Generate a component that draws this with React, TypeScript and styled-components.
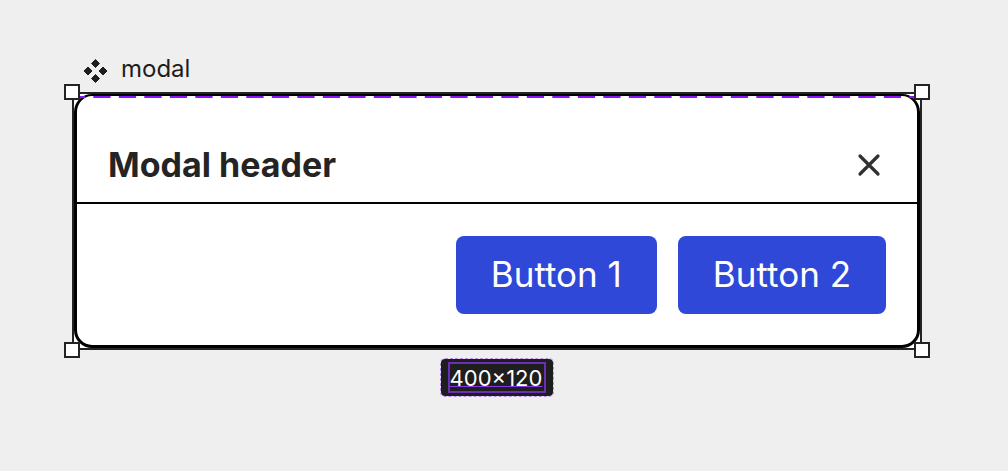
import React from "react";
import styled, { createGlobalStyle } from "styled-components";

const GlobalStyle = createGlobalStyle`
  *, *::before, *::after { box-sizing: border-box; }
  body {
    margin: 0;
    background: #efefef;
    color: #242424;
    font-family: Inter, "Liberation Sans", sans-serif;
  }
`;

const Canvas = styled.main`
  display: flex;
  flex-direction: column;
  min-height: 100vh;
  padding: 54px 86px 32px 72px;
`;

const LayerLabel = styled.div`
  display: flex;
  align-items: center;
  gap: 12px;
  height: 30px;
  margin: 0 0 8px 10px;
  color: #1e1e1e;
  font-size: 24px;
  line-height: 30px;

  svg { margin-top: 4px; }
`;

const Selection = styled.div`
  position: relative;
  border: 2px solid #242424;
  background: #fff;
`;

const Handle = styled.span<{ $v: "top" | "bottom"; $h: "left" | "right" }>`
  position: absolute;
  ${(p) => p.$v}: -10px;
  ${(p) => p.$h}: -10px;
  width: 16px;
  height: 16px;
  border: 2px solid #242424;
  background: #fff;
`;

const Modal = styled.section`
  border: solid #000;
  border-width: 2px 3px 3px;
  border-radius: 18px;
  background: #fff;
`;

const Guide = styled.svg`
  position: absolute;
  top: 2px;
  left: 2px;
  width: calc(100% - 4px);
  height: 2px;
`;

const Header = styled.header`
  display: flex;
  align-items: center;
  justify-content: space-between;
  padding: 42px 31px 10px;
  border-bottom: 2px solid #000;
`;

const Title = styled.h1`
  margin: 0;
  font-size: 34px;
  font-weight: 700;
  line-height: 54px;
`;

const CloseButton = styled.button`
  display: flex;
  padding: 4px;
  border: 0;
  background: transparent;
  color: #303030;
`;

const Footer = styled.footer`
  display: flex;
  justify-content: flex-end;
  gap: 21px;
  padding: 32px 31px 31px;
`;

const ActionButton = styled.button`
  padding: 17px 35px 19px;
  border: 0;
  border-radius: 8px;
  background: #3048d8;
  color: #fff;
  font: 400 35px/42px Inter, "Liberation Sans", sans-serif;
`;

const SizeBadge = styled.div`
  align-self: center;
  margin-top: 8px;
  padding: 3px 7px;
  border: 1px dashed #b98af0;
  border-radius: 5px;
  background: #1e1e1e;
  background-clip: padding-box;
`;

const SizeText = styled.div`
  padding: 1px 2px 0 0;
  border: 2px solid #6b2fb5;
  color: #fff;
  font-size: 22px;
  line-height: 26px;

  span {
    text-decoration: underline #8638e5 1px;
    text-underline-offset: 0;
    text-decoration-skip-ink: none;
  }
`;

export default function App() {
  return (
    <>
      <GlobalStyle />
      <Canvas>
        <LayerLabel>
          <svg width="27" height="26" viewBox="0 0 27 26" fill="currentColor" stroke="currentColor" strokeLinejoin="round" aria-hidden="true">
            <path d="M13.5 1.500 17.500 5.500 13.500 9.500 9.500 5.500ZM13.500 16.500 17.500 20.500 13.500 24.500 9.500 20.500ZM6 9 10 13 6 17 2 13ZM21 9 25 13 21 17 17 13Z" />
          </svg>
          <span>modal</span>
        </LayerLabel>
        <Selection>
          <Modal aria-labelledby="modal-title">
            <Header>
              <Title id="modal-title">Modal header</Title>
              <CloseButton type="button" aria-label="Close">
                <svg width="26" height="26" viewBox="0 0 26 26" fill="none" stroke="currentColor" strokeWidth="3.2" strokeLinecap="round">
                  <path d="M4 4 22 22M22 4 4 22" />
                </svg>
              </CloseButton>
            </Header>
            <Footer>
              <ActionButton type="button">Button 1</ActionButton>
              <ActionButton type="button">Button 2</ActionButton>
            </Footer>
          </Modal>
          <Guide aria-hidden="true">
            <line x1="0" y1="1" x2="100%" y2="1" stroke="#9013fe" strokeWidth="2" strokeDasharray="17.3 8.2" strokeDashoffset="8.2" />
          </Guide>
          <Handle $v="top" $h="left" />
          <Handle $v="top" $h="right" />
          <Handle $v="bottom" $h="left" />
          <Handle $v="bottom" $h="right" />
        </Selection>
        <SizeBadge>
          <SizeText><span>400×120</span></SizeText>
        </SizeBadge>
      </Canvas>
    </>
  );
}
